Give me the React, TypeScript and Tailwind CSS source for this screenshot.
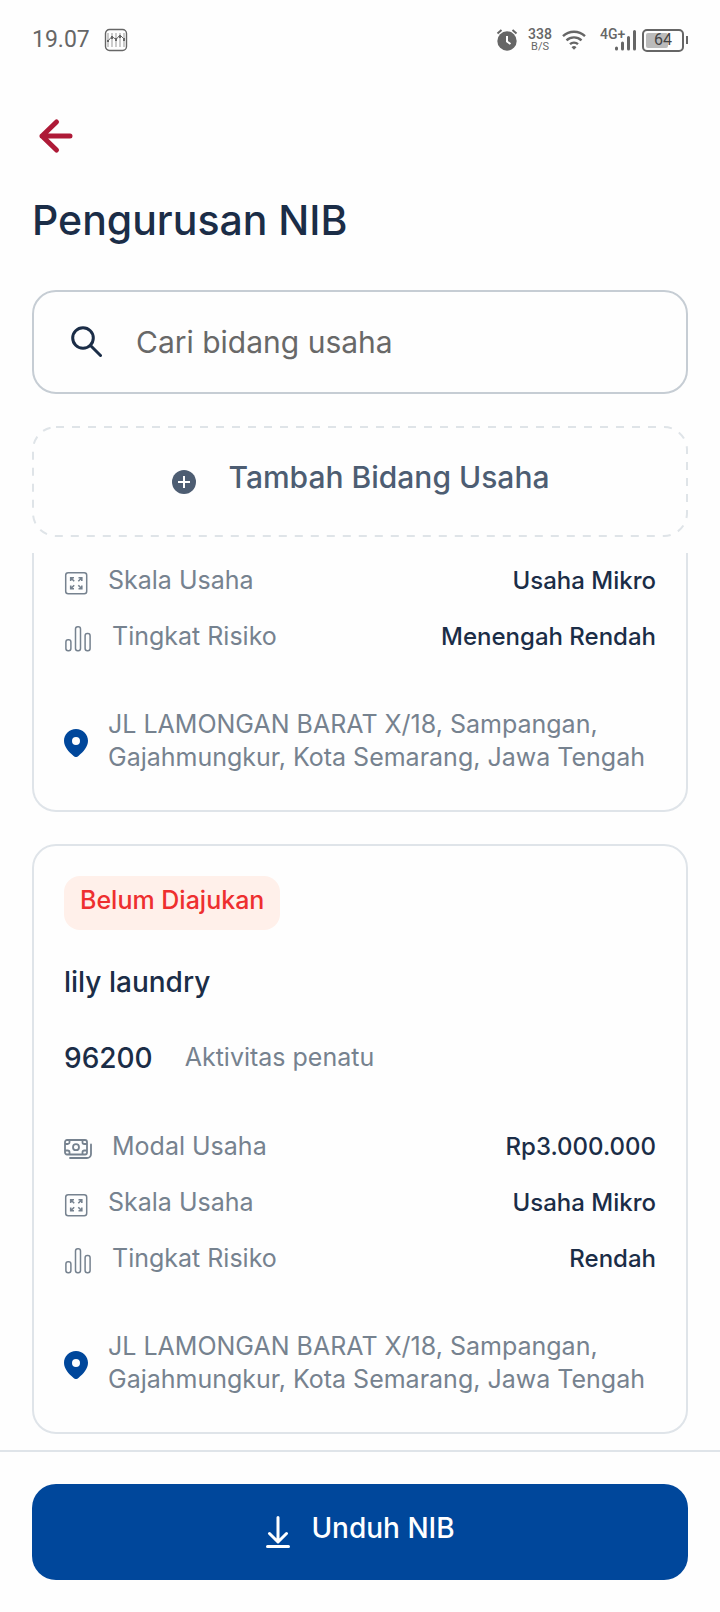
import type { ReactNode } from "react";

type DetailRow = {
  icon: "money" | "scale" | "risk";
  label: string;
  value: string;
};

const ADDRESS =
  "JL LAMONGAN BARAT X/18, Sampangan, Gajahmungkur, Kota Semarang, Jawa Tengah";

const FIRST_ROWS: DetailRow[] = [
  { icon: "scale", label: "Skala Usaha", value: "Usaha Mikro" },
  { icon: "risk", label: "Tingkat Risiko", value: "Menengah Rendah" },
];

const SECOND_ROWS: DetailRow[] = [
  { icon: "money", label: "Modal Usaha", value: "Rp3.000.000" },
  { icon: "scale", label: "Skala Usaha", value: "Usaha Mikro" },
  { icon: "risk", label: "Tingkat Risiko", value: "Rendah" },
];

function MoneyIcon() {
  return (
    <svg className="mt-1 h-6 w-7 shrink-0" viewBox="0 0 28 24" fill="none" stroke="currentColor" strokeWidth="1.8">
      <rect x="1" y="3" width="22" height="14.500" rx="2" />
      <circle cx="12" cy="10.200" r="3" />
      <path d="M5.500 3v2.200A1.800 1.800 0 0 1 3.700 7H1M18.500 3v2.200A1.800 1.800 0 0 0 20.300 7H23M5.500 17.500v-2.200a1.800 1.800 0 0 0-1.800-1.800H1M18.500 17.500v-2.200a1.800 1.800 0 0 1 1.800-1.800H23" />
      <path d="M27 7.500V17a4 4 0 0 1-4 4H6" strokeLinecap="round" />
    </svg>
  );
}

function ScaleIcon() {
  return (
    <svg className="mt-1 size-6 shrink-0" viewBox="0 0 24 24" fill="none" stroke="currentColor" strokeWidth="1.5">
      <rect x="1.7" y="1.7" width="21" height="21" rx="2.500" />
      <path
        d="M6.700 10V6.700H10M6.700 6.700l3.500 3.500M14.500 6.700h3.300V10M17.800 6.700l-3.500 3.500M6.700 14.500v3.300H10M6.700 17.800l3.500-3.500M14.500 17.800h3.300v-3.300M17.800 17.800l-3.500-3.500"
        strokeWidth="1.6"
      />
    </svg>
  );
}

function RiskIcon() {
  return (
    <svg className="mt-1 size-7 shrink-0" viewBox="0 0 28 28" fill="none" stroke="currentColor" strokeWidth="1.5">
      <rect x="1.900" y="14.700" width="5" height="11" rx="2.200" />
      <rect x="11.500" y="1.800" width="5" height="23.900" rx="2.200" />
      <rect x="21.100" y="8.500" width="5" height="17.200" rx="2.200" />
    </svg>
  );
}

function PinIcon() {
  return (
    <svg className="mt-1 h-7 w-6 shrink-0 text-[#00479b]" viewBox="0 0 24 28" fill="currentColor">
      <path
        fillRule="evenodd"
        d="M12 0C5.300 0 0 5.200 0 11.800c0 6 4.600 11 9.600 15.200a3.700 3.700 0 0 0 4.800 0C19.400 22.800 24 17.800 24 11.800 24 5.200 18.700 0 12 0Zm0 16a4 4 0 1 0 0-8 4 4 0 0 0 0 8Z"
      />
    </svg>
  );
}

const ROW_ICONS: Record<DetailRow["icon"], ReactNode> = {
  money: <MoneyIcon />,
  scale: <ScaleIcon />,
  risk: <RiskIcon />,
};

function StatusBar() {
  return (
    <div className="flex h-20 items-center justify-between px-8 font-[Roboto,sans-serif] text-[#666]">
      <div className="flex items-center gap-3.5">
        <span className="text-[23px]">19.07</span>
        <svg className="size-6" viewBox="0 0 24 24" fill="none" stroke="currentColor">
          <rect x="1.500" y="1.500" width="21" height="21" rx="4" strokeWidth="1.400" />
          <path d="M4 5v14M8 5v14M12 5v14M16 5v14M20 5v14" stroke="#999" strokeWidth="1" />
          <path d="M3 14l5-5.500 4 3 4-4.500 5 5" strokeWidth="1" />
          <path d="M4 12v2M8 8v3M12 10v3M16 7v3M20 10v3" strokeWidth="2" />
        </svg>
      </div>
      <div className="flex items-center">
        <svg className="h-6 w-[22px]" viewBox="0 0 22 24">
          <circle cx="11" cy="13" r="9.700" fill="currentColor" />
          <path d="M1.500 5.500 5.500 2M20.500 5.500l-4-3.500" stroke="currentColor" strokeWidth="2" />
          <path d="M11 8v5.500l3.500 2.500" fill="none" stroke="#fff" strokeWidth="2" />
        </svg>
        <div className="ml-2 flex w-7 flex-col items-center text-center">
          <span className="text-sm leading-[13px] font-medium">338</span>
          <span className="text-[11px] leading-[11px]">B/S</span>
        </div>
        <svg className="ml-2 h-5 w-6" viewBox="0 0 24 20" fill="none" stroke="currentColor" strokeWidth="2.400">
          <path d="M1 6.200a16 16 0 0 1 22 0M4.500 10.300a11 11 0 0 1 15 0M8 14.200a6 6 0 0 1 8 0" />
          <path d="M9.500 17.200a3.500 3.500 0 0 1 5 0L12 19.800Z" fill="currentColor" stroke="none" />
        </svg>
        <div className="relative ml-4 h-6 w-9">
          <span className="absolute -top-px -left-0.5 text-sm leading-[14px] font-medium">4G+</span>
          <svg className="size-full" viewBox="0 0 36 24" fill="none" stroke="currentColor" strokeWidth="3" strokeLinecap="round">
            <path d="M14.500 20v1M20.500 15v6M26.500 9.500V21M32.500 3.500V21" />
          </svg>
        </div>
        <div className="ml-1 flex items-center gap-0.5">
          <div className="relative flex h-[23px] w-[42px] items-center justify-center rounded-[5px] border-2 border-current">
            <span className="absolute inset-y-0.5 left-0.5 w-[22px] rounded-xs bg-[#bbb]" />
            <span className="relative text-base text-[#444]">64</span>
          </div>
          <span className="h-2 w-0.5 bg-current" />
        </div>
      </div>
    </div>
  );
}

function Details({ rows }: { rows: DetailRow[] }) {
  return (
    <div className="text-[#76828f]">
      <dl>
        {rows.map((row) => (
          <div key={row.label} className="flex h-14 items-center">
            {ROW_ICONS[row.icon]}
            <dt className="ml-5">{row.label}</dt>
            <dd className="ml-auto text-2xl font-medium text-[#1b2d47]">{row.value}</dd>
          </div>
        ))}
      </dl>
      <div className="mt-[43px] flex items-center gap-5">
        <PinIcon />
        <address className="leading-[33px] not-italic">{ADDRESS}</address>
      </div>
    </div>
  );
}

export default function App() {
  return (
    <div className="flex min-h-screen flex-col bg-[#fefefe] font-[Inter,sans-serif] text-[25px] text-[#1b2d47]">
      <StatusBar />
      <main className="flex-1 px-8">
        <button type="button" aria-label="Kembali" className="mt-8 block text-[#ae1a37]">
          <svg className="size-12" viewBox="0 0 48 48" fill="none" stroke="currentColor" strokeWidth="5" strokeLinecap="round" strokeLinejoin="round">
            <path d="M24.500 10 10 24l14.500 14M10 24h28" />
          </svg>
        </button>
        <h1 className="mt-[30px] text-[41px] leading-[60px] font-medium">Pengurusan NIB</h1>

        <label className="mt-10 flex h-[104px] items-center gap-[34px] rounded-3xl border-2 border-[#c6cdd4] px-9">
          <svg className="size-8 shrink-0" viewBox="0 0 32 32" fill="none" stroke="currentColor" strokeWidth="3" strokeLinecap="round">
            <circle cx="13" cy="12" r="10.300" />
            <path d="m20.500 19.500 10 10" />
          </svg>
          <input
            type="search"
            aria-label="Cari bidang usaha"
            placeholder="Cari bidang usaha"
            className="min-w-0 flex-1 text-[30px] outline-none placeholder:text-[#686868]"
          />
        </label>

        <button
          type="button"
          className="relative mt-8 flex h-[111px] w-full items-center justify-center gap-8 text-[30px] font-medium text-[#4d5d72]"
        >
          <svg className="absolute inset-0 size-full" fill="none" stroke="#dfe4e8" strokeWidth="2" strokeDasharray="8 8" aria-hidden="true">
            <rect x="1" y="1" rx="23" className="h-[calc(100%-2px)] w-[calc(100%-2px)]" />
          </svg>
          <svg className="size-[26px]" viewBox="0 0 26 26">
            <circle cx="13" cy="13" r="12" fill="currentColor" />
            <path d="M13 7v12M7 13h12" stroke="#fff" strokeWidth="2" />
          </svg>
          <span className="pb-2">Tambah Bidang Usaha</span>
        </button>

        {/* kartu pertama sudah tergulir, bagian atasnya tidak terlihat */}
        <article className="mt-4 rounded-b-3xl border-2 border-t-0 border-[#dfe4e9] px-[30px] pb-9">
          <Details rows={FIRST_ROWS} />
        </article>

        <article className="mt-8 rounded-3xl border-2 border-[#dfe4e9] px-[30px] pt-[30px] pb-9">
          <span className="flex h-[54px] w-fit items-center rounded-2xl bg-[#fff0ea] px-4 font-medium text-[#ee2f2f]">
            <span className="pb-1">Belum Diajukan</span>
          </span>
          <h2 className="mt-6 flex h-14 items-center text-[28px] font-medium">lily laundry</h2>
          <div className="mt-5 mb-[33px] flex h-14 items-center gap-8">
            <span className="text-[28px] font-medium">96200</span>
            <span className="text-[#76828f]">Aktivitas penatu</span>
          </div>
          <Details rows={SECOND_ROWS} />
        </article>
      </main>

      <footer className="mt-4 border-t-2 border-[#dfe4e9] px-8 py-8">
        <button
          type="button"
          className="flex h-24 w-full items-center justify-center gap-5 rounded-3xl bg-[#00479b] text-[28px] font-medium text-white"
        >
          <svg className="h-8 w-[26px]" viewBox="0 0 26 32" fill="none" stroke="currentColor" strokeWidth="3" strokeLinecap="round" strokeLinejoin="round">
            <path d="M13 1.500v24M4.500 17.500l8.500 8.500 8.500-8.500M2.500 30.500h21" />
          </svg>
          <span className="pb-2">Unduh NIB</span>
        </button>
      </footer>
    </div>
  );
}
